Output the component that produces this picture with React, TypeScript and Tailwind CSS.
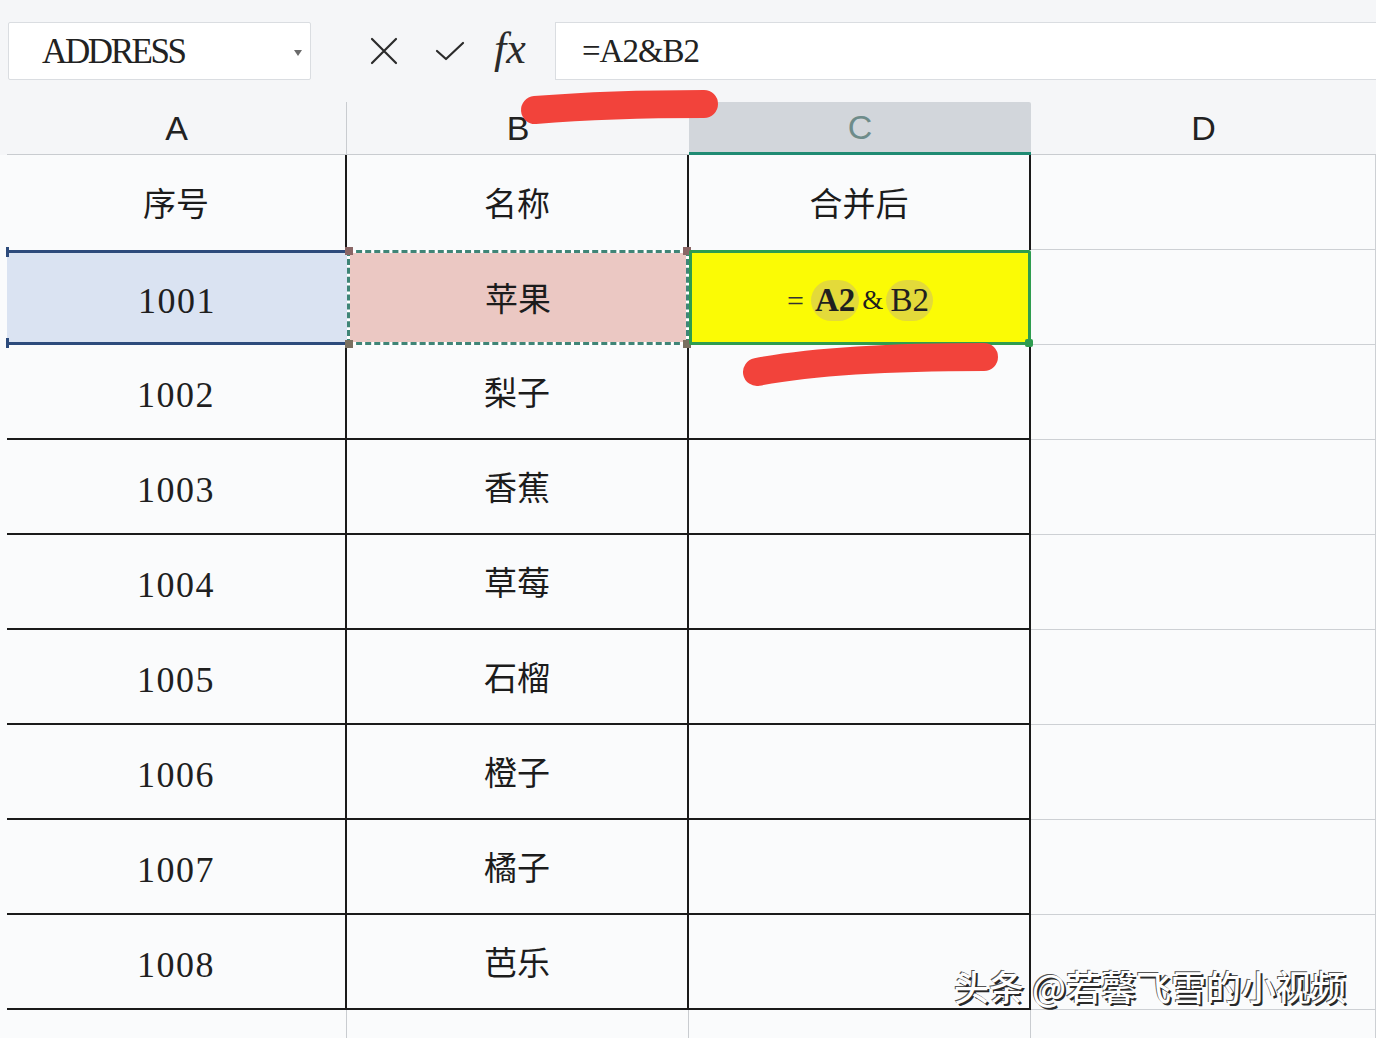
import React from "react";

const serif = "font-['Liberation_Serif',serif]";
const cjk = "font-['Noto_Sans_CJK_SC',sans-serif]";

const rows = [
  ["1002", "梨子"],
  ["1003", "香蕉"],
  ["1004", "草莓"],
  ["1005", "石榴"],
  ["1006", "橙子"],
  ["1007", "橘子"],
  ["1008", "芭乐"],
];

function Num({ children }: { children: React.ReactNode }) {
  return (
    <span className={`${serif} text-[36px] tracking-[1.5px] text-[#1f1f1f] leading-none pt-[6px]`}>
      {children}
    </span>
  );
}

function Zh({ children }: { children: React.ReactNode }) {
  return <span className={`${cjk} text-[33px] text-[#1c1c1c] leading-none`}>{children}</span>;
}

export default function App() {
  return (
    <div className="relative w-[1376px] h-[1038px] overflow-hidden bg-[#f5f6f8]">
      {/* formula bar */}
      <div className="flex h-[102px] pt-[22px] pb-[22px] pl-[8px]">
        <div className="relative flex items-center w-[303px] h-[58px] bg-white border border-[#dadde1] rounded-[2px] pl-[33px]">
          <span className={`${serif} text-[35px] tracking-[-2.4px] text-[#222] leading-none`}>ADDRESS</span>
          <span className="absolute right-[8px] top-[27px] w-0 h-0 border-l-[4px] border-r-[4px] border-t-[6px] border-l-transparent border-r-transparent border-t-[#6b6b6b]" />
        </div>
        <div className="flex items-center w-[244px] h-[58px] pl-[59px]">
          <svg width="28" height="28" viewBox="0 0 28 28" className="shrink-0">
            <path d="M2 2 L26 26 M26 2 L2 26" stroke="#2b2b2b" strokeWidth="2.2" strokeLinecap="round" />
          </svg>
          <svg width="32" height="22" viewBox="0 0 32 22" className="ml-[36px] shrink-0">
            <path d="M3 11 L12 19 L29 3" stroke="#2b2b2b" strokeWidth="2.2" fill="none" strokeLinecap="round" strokeLinejoin="round" />
          </svg>
          <span className="ml-[28px] font-['Liberation_Serif',serif] italic text-[44px] text-[#2b2b2b] leading-none -mt-[4px]">
            fx
          </span>
        </div>
        <div className="flex items-center flex-1 h-[58px] bg-white border border-[#dadde1] border-r-0 pl-[26px]">
          <span className={`${serif} text-[33px] tracking-[-1px] text-[#222] leading-none`}>=A2&amp;B2</span>
        </div>
      </div>

      {/* column headers */}
      <div className="flex h-[53px] pl-[7px] font-['Liberation_Sans',sans-serif] text-[34px] leading-none">
        <div className="flex items-center justify-center w-[340px] border-b border-r border-[#c9ccd0] text-[#222]">A</div>
        <div className="flex items-center justify-center w-[342px] border-b border-[#c9ccd0] text-[#222]">B</div>
        <div className="flex items-center justify-center w-[342px] bg-[#d2d6db] border-b-[3px] border-[#1f8b73] text-[#6e8c8a] rounded-tl-[2px] rounded-tr-[2px]">
          C
        </div>
        <div className="flex items-center justify-center flex-1 border-b border-[#c9ccd0] text-[#222]">D</div>
      </div>

      {/* sheet */}
      <div className="pl-[7px] bg-[#fafbfc]">
        {/* header row */}
        <div className="flex h-[95px]">
          <div className="flex items-center justify-center w-[340px] border-r-2 border-[#1a1a1a]">
            <Zh>序号</Zh>
          </div>
          <div className="flex items-center justify-center w-[342px] border-r-2 border-[#1a1a1a]">
            <Zh>名称</Zh>
          </div>
          <div className="flex items-center justify-center w-[342px] border-r-2 border-[#1a1a1a]">
            <Zh>合并后</Zh>
          </div>
          <div className="flex-1 border-b border-r border-[#cdd0d4]" />
        </div>

        {/* selected row */}
        <div className="flex h-[95px]">
          <div className="relative flex items-center justify-center w-[340px] bg-[#dae3f2] border-y-[3px] border-[#2d4b7c]">
            <span className="absolute -left-[1px] -top-[6px] w-[3px] h-[10px] bg-[#2d4b7c]" />
            <span className="absolute -left-[1px] -bottom-[6px] w-[3px] h-[10px] bg-[#2d4b7c]" />
            <Num>1001</Num>
          </div>
          <div className="relative w-[342px] bg-white">
            <div className="flex items-center justify-center h-full border-[3px] border-dashed border-[#3f8577] bg-[#ebc8c3] bg-clip-padding">
              <Zh>苹果</Zh>
            </div>
            <span className="absolute -left-[2px] -top-[3px] w-[8px] h-[8px] bg-[#8a6666]" />
            <span className="absolute -right-[2px] -top-[3px] w-[8px] h-[8px] bg-[#8a6666]" />
            <span className="absolute -left-[2px] -bottom-[3px] w-[8px] h-[8px] bg-[#7a7060]" />
            <span className="absolute -right-[2px] -bottom-[3px] w-[8px] h-[8px] bg-[#7a7060]" />
          </div>
          <div className="relative flex items-center justify-center gap-[3px] w-[342px] bg-[#fbfb05] border-[3px] border-[#2e9c4f] rounded-[2px] pt-[6px]">
            <span className={`${serif} text-[30px] text-[#333] leading-none mr-[4px]`}>=</span>
            <span className={`${serif} text-[33px] text-[#1f1f1f] leading-none font-bold px-[4px] py-[4px] rounded-full bg-[#e3da3a]`}>
              A2
            </span>
            <span className={`${serif} text-[27px] text-[#1f1f1f] leading-none`}>&amp;</span>
            <span className={`${serif} text-[33px] text-[#1f1f1f] leading-none px-[4px] py-[4px] rounded-full bg-[#e3da3a]`}>
              B2
            </span>
            <span className="absolute -right-[5px] -bottom-[5px] w-[8px] h-[8px] rounded-[2px] bg-[#2e9c4f]" />
          </div>
          <div className="flex-1 border-b border-r border-[#cdd0d4]" />
        </div>

        {rows.map(([n, name]) => (
          <div key={n} className="flex h-[95px]">
            <div className="flex items-center justify-center w-[340px] border-r-2 border-b-2 border-[#1a1a1a]">
              <Num>{n}</Num>
            </div>
            <div className="flex items-center justify-center w-[342px] border-r-2 border-b-2 border-[#1a1a1a]">
              <Zh>{name}</Zh>
            </div>
            <div className="w-[342px] border-r-2 border-b-2 border-[#1a1a1a]" />
            <div className="flex-1 border-b border-r border-[#cdd0d4]" />
          </div>
        ))}

        {/* partial last row */}
        <div className="flex h-[40px]">
          <div className="w-[340px] border-r border-[#c9ccd0]" />
          <div className="w-[342px] border-r border-[#c9ccd0]" />
          <div className="w-[342px] border-r border-[#c9ccd0]" />
          <div className="flex-1 border-r border-[#cdd0d4]" />
        </div>
      </div>

      {/* red marker strokes */}
      <svg className="absolute inset-0 pointer-events-none" width="1376" height="1038" viewBox="0 0 1376 1038">
        <path d="M535 110 Q 610 104 704 104" stroke="#f2433b" strokeWidth="28" strokeLinecap="round" fill="none" />
        <path d="M757 372 Q 835 357 984 357" stroke="#f2433b" strokeWidth="28" strokeLinecap="round" fill="none" />
      </svg>

      {/* watermark */}
      <div
        className={`absolute left-[954px] top-[968px] ${cjk} font-medium text-[35px] leading-none text-white [text-shadow:2px_2px_0_#2a2a2a,-1px_-1px_0_#555]`}
      >
        头条 @若馨飞雪的小视频
      </div>
    </div>
  );
}
